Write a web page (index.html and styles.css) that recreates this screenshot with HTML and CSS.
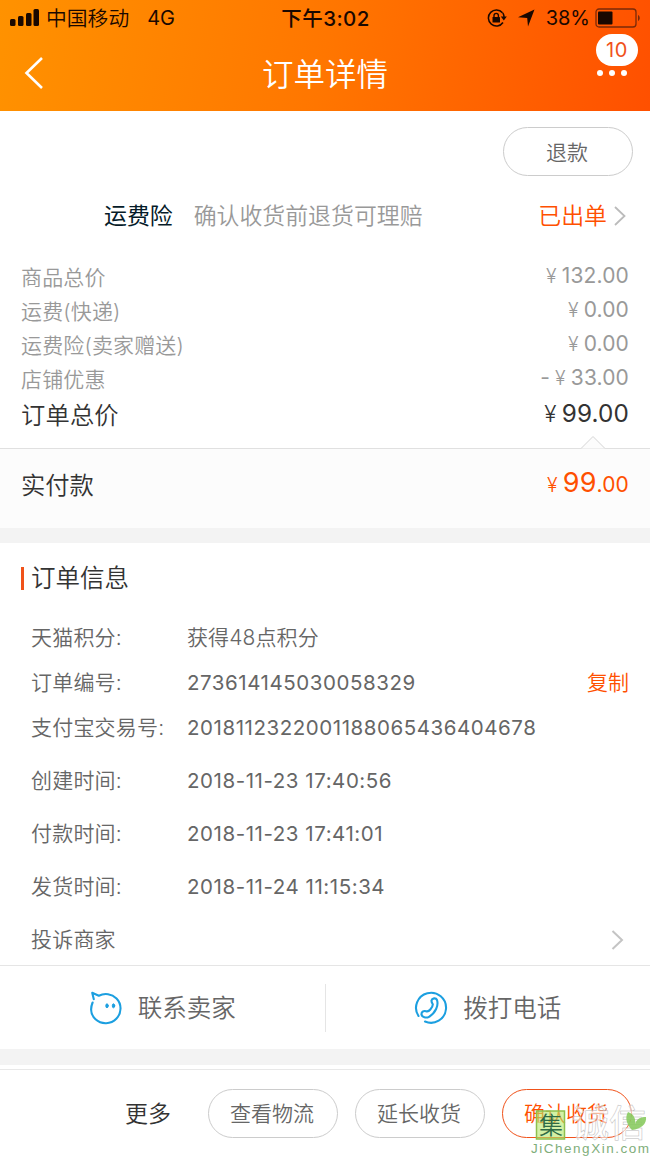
FILE: index.html
```html
<!DOCTYPE html>
<html lang="zh-CN">
<head>
  <meta charset="UTF-8">
  <meta name="viewport" content="width=device-width, initial-scale=1.0">
  <title>订单详情</title>
  <link rel="stylesheet" href="styles.css">
</head>
<body>

  <!-- Header -->
  <header class="header">
    <div class="status-bar">
      <div class="status-left">
        <svg class="signal" width="29" height="18" viewBox="0 0 29 18">
          <rect x="0" y="10" width="5.5" height="7" rx="1.5"/>
          <rect x="8" y="7" width="5.5" height="10" rx="1.5"/>
          <rect x="16" y="4" width="5.5" height="13" rx="1.5"/>
          <rect x="23.5" y="0" width="5.5" height="17" rx="1.5"/>
        </svg>
        <span class="carrier">中国移动</span>
        <span class="network">4G</span>
      </div>
      <span class="time">下午3:02</span>
      <div class="status-right">
        <svg width="20" height="18" viewBox="0 0 20 18">
          <path d="M15.5 3.8A8 8 0 1 0 16 13.5M15.8 3.8A8 8 0 0 1 17 8" fill="none" stroke="#1a0800" stroke-width="1.5"/>
          <path d="M13.8 7.5h6l-3 4z"/>
          <rect x="5.5" y="8" width="7.5" height="5.5" rx="0.6"/>
          <path d="M7 8.5V6.6a2.2 2.2 0 0 1 4.4 0v1.9" fill="none" stroke="#1a0800" stroke-width="1.4"/>
        </svg>
        <svg class="locate" width="17" height="18" viewBox="0 0 17 18">
          <path d="M16.5 0.5L10 17.5 9.2 9 0 8.2z"/>
        </svg>
        <span class="percent">38%</span>
        <svg class="battery" width="46" height="20" viewBox="0 0 46 20">
          <rect x="1" y="1" width="40" height="18" rx="3" fill="none" stroke="#7a2a08" stroke-width="1.3"/>
          <rect x="3" y="3.5" width="14.5" height="13" rx="1"/>
          <path d="M43 7c2.3 1 2.3 5 0 6z" fill="#7a2a08"/>
        </svg>
      </div>
    </div>
    <div class="nav-bar">
      <svg class="back" width="20" height="34" viewBox="0 0 20 34">
        <path d="M18 2L2.5 17 18 32" fill="none" stroke="#fff" stroke-width="2.6"/>
      </svg>
      <h1>订单详情</h1>
      <div class="more-dots"><i></i><i></i><i></i></div>
      <span class="badge">10</span>
    </div>
  </header>

  <!-- Refund + insurance -->
  <div class="refund">
    <button type="button" class="btn">退款</button>
  </div>
  <div class="insurance">
    <span class="insurance-name">运费险</span>
    <span class="insurance-desc">确认收货前退货可理赔</span>
    <span class="insurance-state">已出单</span>
    <svg class="insurance-arrow" width="12" height="20" viewBox="0 0 12 20"><path d="M1 1l9.5 9L1 19" fill="none" stroke="#bbb" stroke-width="1.8"/></svg>
  </div>

  <!-- Price list -->
  <div class="prices">
    <div class="price-row"><span>商品总价</span><span class="amount"><b>¥</b>132.00</span></div>
    <div class="price-row"><span>运费(快递)</span><span class="amount"><b>¥</b>0.00</span></div>
    <div class="price-row"><span>运费险(卖家赠送)</span><span class="amount"><b>¥</b>0.00</span></div>
    <div class="price-row"><span>店铺优惠</span><span class="amount"><i>-</i><b>¥</b>33.00</span></div>
    <div class="price-row total"><span>订单总价</span><span class="amount"><b>¥</b>99.00</span></div>
  </div>
  <div class="paid">
    <svg class="notch" width="24" height="14" viewBox="0 0 24 14"><path d="M0 13.5L12 1.5 24 13.5" fill="#fcfcfc" stroke="#d4d4d4"/></svg>
    <span>实付款</span>
    <span class="amount paid-amount"><b>¥</b><em>99</em>.00</span>
  </div>

  <!-- Order info -->
  <div class="info">
    <h2>订单信息</h2>
    <div class="info-row"><span class="label">天猫积分:</span><span class="value mixed">获得48点积分</span></div>
    <div class="info-row"><span class="label">订单编号:</span><span class="value">273614145030058329</span><span class="copy">复制</span></div>
    <div class="info-row"><span class="label">支付宝交易号:</span><span class="value">2018112322001188065436404678</span></div>
    <div class="info-row tall first"><span class="label">创建时间:</span><span class="value">2018-11-23 17:40:56</span></div>
    <div class="info-row tall"><span class="label">付款时间:</span><span class="value">2018-11-23 17:41:01</span></div>
    <div class="info-row tall"><span class="label">发货时间:</span><span class="value">2018-11-24 11:15:34</span></div>
    <div class="info-row tall complain">
      <span class="label">投诉商家</span>
      <svg width="13" height="20" viewBox="0 0 13 20"><path d="M1.5 1l9.5 9-9.5 9" fill="none" stroke="#c4c4c4" stroke-width="2"/></svg>
    </div>
  </div>

  <!-- Contact -->
  <div class="contact">
    <div class="contact-item">
      <svg width="34" height="34" viewBox="0 0 34 34" fill="none" stroke="#1c9fe0" stroke-width="2.1" stroke-linecap="round" stroke-linejoin="round">
        <path d="M3.6 11.5C1 18 2 24 6.5 28.3c6 5.5 15.5 5 20.8-.5 5.6-6 5.6-14.8.2-20.3C22.7 2.7 15.7 1.700 9.800 4.700L3.200 1.800l1.600 6.400"/>
        <ellipse cx="18" cy="14.8" rx="1.2" ry="2" fill="#1c9fe0" stroke-width="1"/>
        <ellipse cx="24.5" cy="14.8" rx="1.2" ry="2" fill="#1c9fe0" stroke-width="1"/>
      </svg>
      <span>联系卖家</span>
    </div>
    <div class="contact-item">
      <svg width="34" height="34" viewBox="0 0 34 34" fill="none" stroke="#1c9fe0" stroke-width="2.1" stroke-linecap="round" stroke-linejoin="round">
        <path d="M4.5 25A15 15 0 1 1 11 30.5"/>
        <path d="M17.5 9.5c.5-2.500 4.500-3 5.500-.5 1.800 5.500-1.500 13-8 16.800-3 1.700-7 .2-7.500-2-.4-2.600 2-4.500 4.500-3.600 1.800.6 2.800.2 4.300-1.700 1.500-1.800 2.600-3.500 2.500-5.200-.7-1.200-1.500-2.200-1.300-3.800z"/>
      </svg>
      <span>拨打电话</span>
    </div>
  </div>
  <div class="gap"></div>

  <!-- Bottom actions -->
  <footer class="actions">
    <span class="more">更多</span>
    <button type="button" class="btn">查看物流</button>
    <button type="button" class="btn">延长收货</button>
    <button type="button" class="btn primary">确认收货</button>
  </footer>

  <svg class="watermark" width="122" height="52" viewBox="0 0 122 52">
    <rect x="8.5" y="6" width="28" height="28" fill="#b5e86b" fill-opacity="0.6" stroke="#8fc04e" stroke-width="1.5"/>
    <text x="11" y="29" class="wm-seal">集</text>
    <text x="44" y="32" class="wm-name">诚信</text>
    <path d="M103 24c-5-6-6-12-3-17 6 2 8 7 7 12 2-6 6-7 11-7 1 7-5 12-14 13z" fill="#8acb61" fill-opacity="0.9"/>
    <text x="3" y="48" class="wm-url" textLength="118">JiChengXin.com</text>
  </svg>

</body>
</html>
```
FILE: styles.css
```css
* {
  box-sizing: border-box;
}
body {
  position: relative;
  margin: 0;
  width: 650px;
  height: 1156px;
  overflow: hidden;
  background-color: #fff;
  color: #666;
  font-family: Inter, "Noto Sans CJK SC", sans-serif;
  font-size: 21px;
  font-weight: 350;
}
svg {
  display: block;
  flex-shrink: 0;
}
b, i, em {
  font-weight: inherit;
  font-style: normal;
}

/* Header */
.header {
  height: 111px;
  background: linear-gradient(100deg, #ff9200, #ff7600 50%, #ff5000);
}
.status-bar {
  display: grid;
  grid-template-columns: 1fr auto 1fr;
  align-items: center;
  height: 36px;
  padding: 0 9px 0 10px;
  color: #1a0800;
  font-size: 20px;
  fill: #1a0800;
}
.status-left,
.status-right {
  display: flex;
  align-items: center;
}
.status-right {
  justify-content: flex-end;
}
.signal {
  margin-right: 7px;
}
.carrier {
  margin-right: 18px;
  padding-bottom: 2px;
  font-size: 20.8px;
}
.network,
.percent {
  font-weight: 400;
}
.time {
  padding-bottom: 3px;
  font-size: 20.5px;
  font-weight: 500;
  letter-spacing: 0.4px;
}
.locate {
  margin: 0 11px;
}
.battery {
  margin-left: 5px;
}
.nav-bar {
  position: relative;
  display: flex;
  align-items: center;
  justify-content: space-between;
  height: 74px;
  padding: 0 23px 0 24px;
}
.nav-bar h1 {
  margin: 0 0 0 9px;
  padding-bottom: 3px;
  color: #fff;
  font-size: 31.5px;
  font-weight: 350;
}
.more-dots {
  display: flex;
  gap: 6px;
}
.more-dots i {
  width: 6px;
  height: 6px;
  border-radius: 50%;
  background-color: #fff;
}
.badge {
  position: absolute;
  top: -2px;
  right: 12px;
  width: 42px;
  height: 32px;
  border-radius: 16px;
  background-color: #fff;
  color: #f0521a;
  font-size: 20px;
  font-weight: 400;
  letter-spacing: 0.6px;
  line-height: 33px;
  text-align: center;
}

/* Refund + insurance */
.btn {
  width: 130px;
  height: 49px;
  padding: 0 2px 2px 0;
  border: 1px solid #ccc;
  border-radius: 25px;
  background-color: #fff;
  color: #666;
  font-family: inherit;
  font-size: 21px;
  font-weight: 350;
}
.refund {
  display: flex;
  justify-content: flex-end;
  padding: 16px 17px 0 0;
}
.insurance {
  display: flex;
  align-items: center;
  height: 80px;
  padding: 0 24px 4px 104px;
  font-size: 22.9px;
}
.insurance-name {
  margin-right: 21px;
  color: #051b28;
  font-weight: 400;
}
.insurance-desc {
  flex: 1;
  color: #999;
}
.insurance-state {
  margin-right: 7px;
  color: #ff5000;
}
.insurance-arrow {
  margin-top: 3px;
}

/* Prices */
.prices {
  height: 192px;
  padding: 3px 21px 0;
}
.price-row {
  display: flex;
  align-items: center;
  justify-content: space-between;
  height: 34px;
  color: #999;
  letter-spacing: 0.15px;
}
.amount {
  padding-bottom: 2px;
  font-weight: 400;
  letter-spacing: 0.15px;
}
.amount b {
  margin-right: 5px;
  font-size: 0.93em;
  font-weight: 350;
}
.amount i {
  margin-right: 5px;
}
.total {
  height: 37px;
  color: #333;
  font-size: 24.3px;
}
.paid {
  position: relative;
  display: flex;
  align-items: center;
  justify-content: space-between;
  height: 80px;
  padding: 0 21px 10px;
  border-top: 1px solid #e0e0e0;
  background-color: #fcfcfc;
  color: #333;
  font-size: 24.3px;
}
.notch {
  position: absolute;
  top: -14px;
  right: 45px;
}
.paid-amount {
  color: #ff5000;
  font-size: 21px;
}
.paid-amount em {
  font-size: 27px;
}

/* Order info */
.info {
  height: 438px;
  padding: 24px 21px 0;
  border-top: 15px solid #f3f3f3;
  border-bottom: 1px solid #e5e5e5;
}
.info h2 {
  height: 23px;
  margin: 0 0 25px;
  padding-left: 7px;
  border-left: 3px solid #f0521a;
  color: #333;
  font-size: 24.5px;
  font-weight: 350;
  line-height: 23px;
}
.info-row {
  display: flex;
  align-items: center;
  height: 45px;
  padding-left: 10px;
}
.info-row.tall {
  height: 53px;
}
.info-row.first {
  margin-top: 4px;
}
.label {
  width: 156px;
  padding-bottom: 3px;
  letter-spacing: 0.2px;
}
.value {
  flex: 1;
  font-size: 20.5px;
  font-weight: 400;
  letter-spacing: 0.55px;
}
.value.mixed {
  padding-bottom: 3px;
  font-size: 21px;
  font-weight: 350;
  letter-spacing: 0.1px;
}
.copy {
  padding-bottom: 3px;
  color: #ff5000;
}
.complain {
  justify-content: space-between;
  height: 52px;
  padding-right: 5px;
}

/* Contact */
.contact {
  display: flex;
  align-items: center;
  height: 83px;
  font-size: 24.5px;
}
.contact-item {
  display: flex;
  flex: 1;
  align-items: center;
  justify-content: center;
  gap: 15px;
  height: 48px;
}
.contact-item span {
  padding-bottom: 2px;
}
.contact-item + .contact-item {
  border-left: 1px solid #e5e5e5;
}
.gap {
  height: 20px;
  border-top: 16px solid #f3f3f3;
}

/* Bottom actions */
.actions {
  display: flex;
  align-items: center;
  justify-content: flex-end;
  gap: 17px;
  height: 87px;
  padding-right: 18px;
  border-top: 1px solid #e8e8e8;
}
.more {
  margin-right: 20px;
  padding-bottom: 3px;
  color: #333;
  font-size: 23px;
}
.btn.primary {
  border-color: #f0521a;
  color: #ff5000;
}

/* Watermark */
.watermark {
  position: absolute;
  right: 0;
  bottom: -1px;
  overflow: visible;
}
.wm-seal {
  fill: #2f6b45;
  font-size: 24px;
}
.wm-name {
  fill: #fff;
  fill-opacity: 0.6;
  stroke: #bbb;
  stroke-width: 0.5;
  font-size: 37px;
  font-weight: 500;
}
.wm-url {
  fill: #7fae7a;
  font-family: "Liberation Sans", Arial, sans-serif;
  font-size: 13.5px;
}
```
